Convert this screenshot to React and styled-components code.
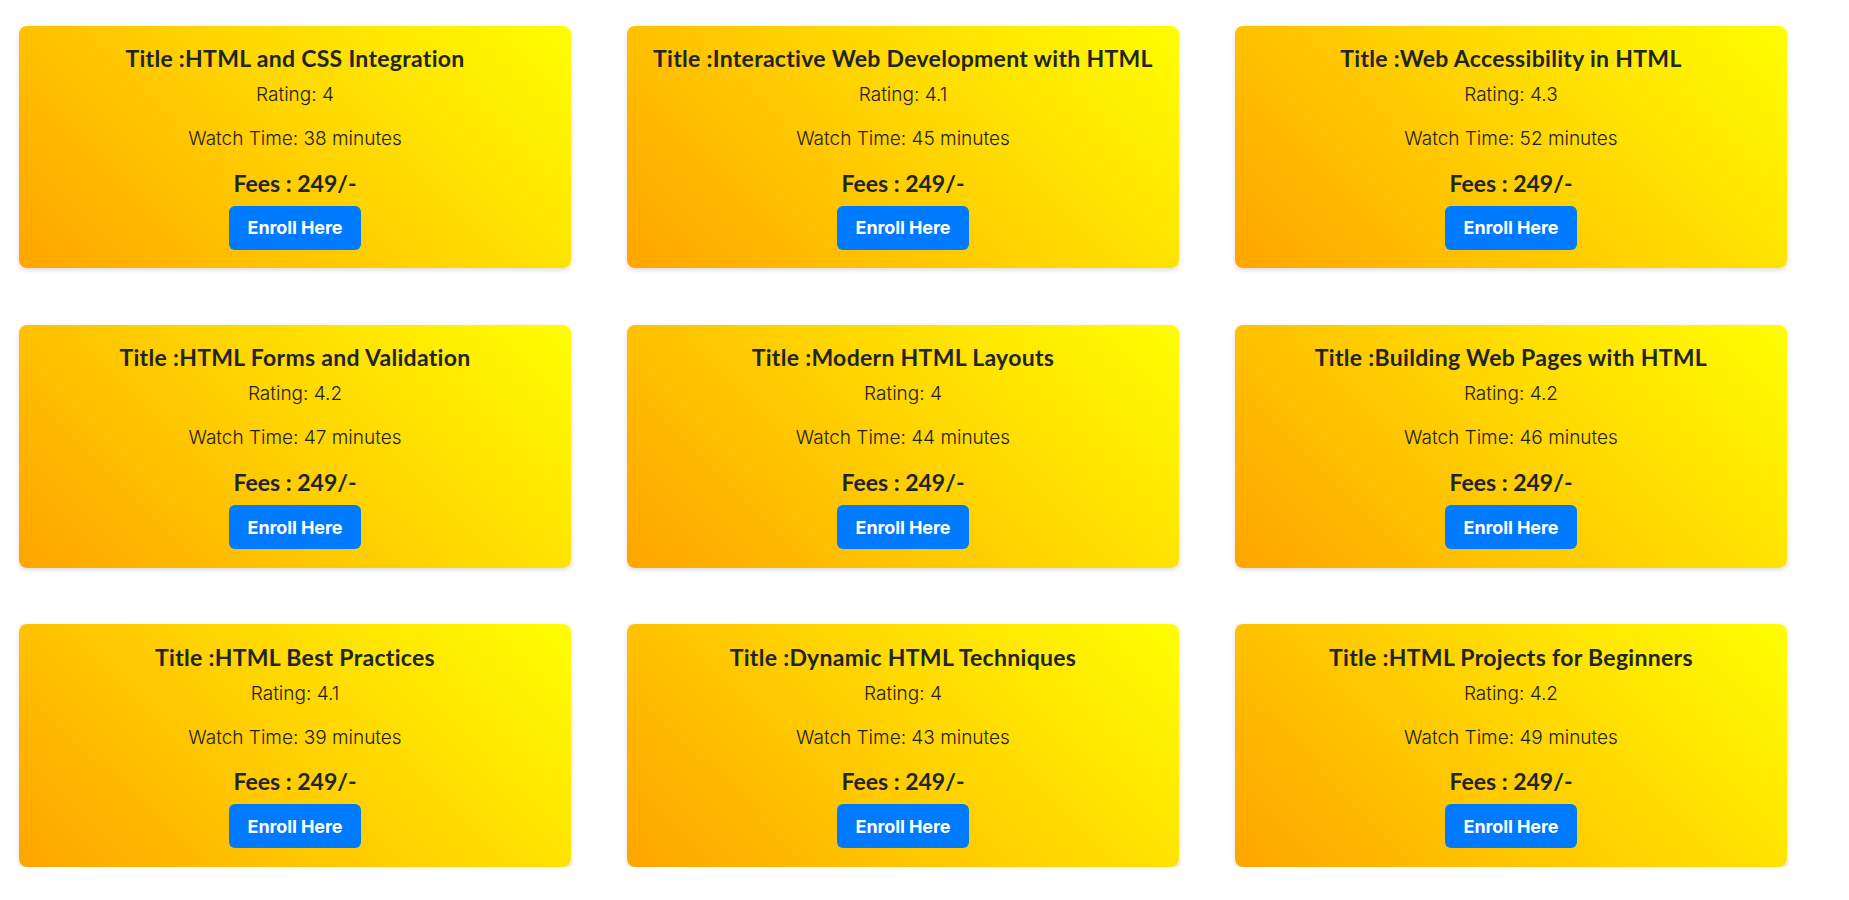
import React from "react";
import styled, { createGlobalStyle } from "styled-components";

const GlobalStyle = createGlobalStyle`
  html, body { margin: 0; padding: 0; background: #ffffff; }
  body { font-family: "Inter", "Noto Sans", sans-serif; }
`;

const Grid = styled.main`
  display: grid;
  grid-template-columns: repeat(3, 551.4px);
  column-gap: 56.6px;
  row-gap: 56.7px;
  padding: 25.7px 0 0 19.3px;
`;

const Card = styled.section`
  display: flex;
  flex-direction: column;
  align-items: center;
  height: 242.6px;
  box-sizing: border-box;
  padding: 18.4px 20px 0;
  border-radius: 8px;
  background: linear-gradient(45deg, #ffa500, #ffff00);
  box-shadow: 0 2px 5px rgba(0, 0, 0, 0.14);
  color: #212529;
`;

const Title = styled.h3`
  margin: 0;
  font-family: "Lato", "Noto Sans", sans-serif;
  font-weight: 700;
  font-size: 23px;
  line-height: 28px;
  letter-spacing: ${(p) => (p.$tight ? "0" : "0.3px")};
  white-space: nowrap;
`;

const Info = styled.p`
  margin: ${(p) => p.$top}px 0 0;
  font-family: "Inter", "Noto Sans", sans-serif;
  font-weight: 300;
  font-size: 19px;
  line-height: 24px;
  color: #1e2125;
`;

const Fees = styled(Title)`
  margin-top: 17.6px;
`;

const EnrollButton = styled.button`
  margin-top: 9.2px;
  width: 132.4px;
  height: 44px;
  border: none;
  border-radius: 6px;
  background: #007bff;
  color: #ffffff;
  font-family: "Inter", "Noto Sans", sans-serif;
  font-weight: 700;
  font-size: 18px;
  letter-spacing: -0.1px;
  cursor: pointer;
`;

const courses = [
  { title: "HTML and CSS Integration", rating: "4", time: 38 },
  { title: "Interactive Web Development with HTML", rating: "4.1", time: 45 },
  { title: "Web Accessibility in HTML", rating: "4.3", time: 52 },
  { title: "HTML Forms and Validation", rating: "4.2", time: 47 },
  { title: "Modern HTML Layouts", rating: "4", time: 44 },
  { title: "Building Web Pages with HTML", rating: "4.2", time: 46 },
  { title: "HTML Best Practices", rating: "4.1", time: 39 },
  { title: "Dynamic HTML Techniques", rating: "4", time: 43 },
  { title: "HTML Projects for Beginners", rating: "4.2", time: 49 },
];

export default function App() {
  return (
    <>
      <GlobalStyle />
      <Grid>
        {courses.map((c) => (
          <Card key={c.title}>
            <Title>Title :{c.title}</Title>
            <Info $top={11}>Rating: {c.rating}</Info>
            <Info $top={20}>Watch Time: {c.time} minutes</Info>
            <Fees as="h3" $tight>Fees : 249/-</Fees>
            <EnrollButton>Enroll Here</EnrollButton>
          </Card>
        ))}
      </Grid>
    </>
  );
}
